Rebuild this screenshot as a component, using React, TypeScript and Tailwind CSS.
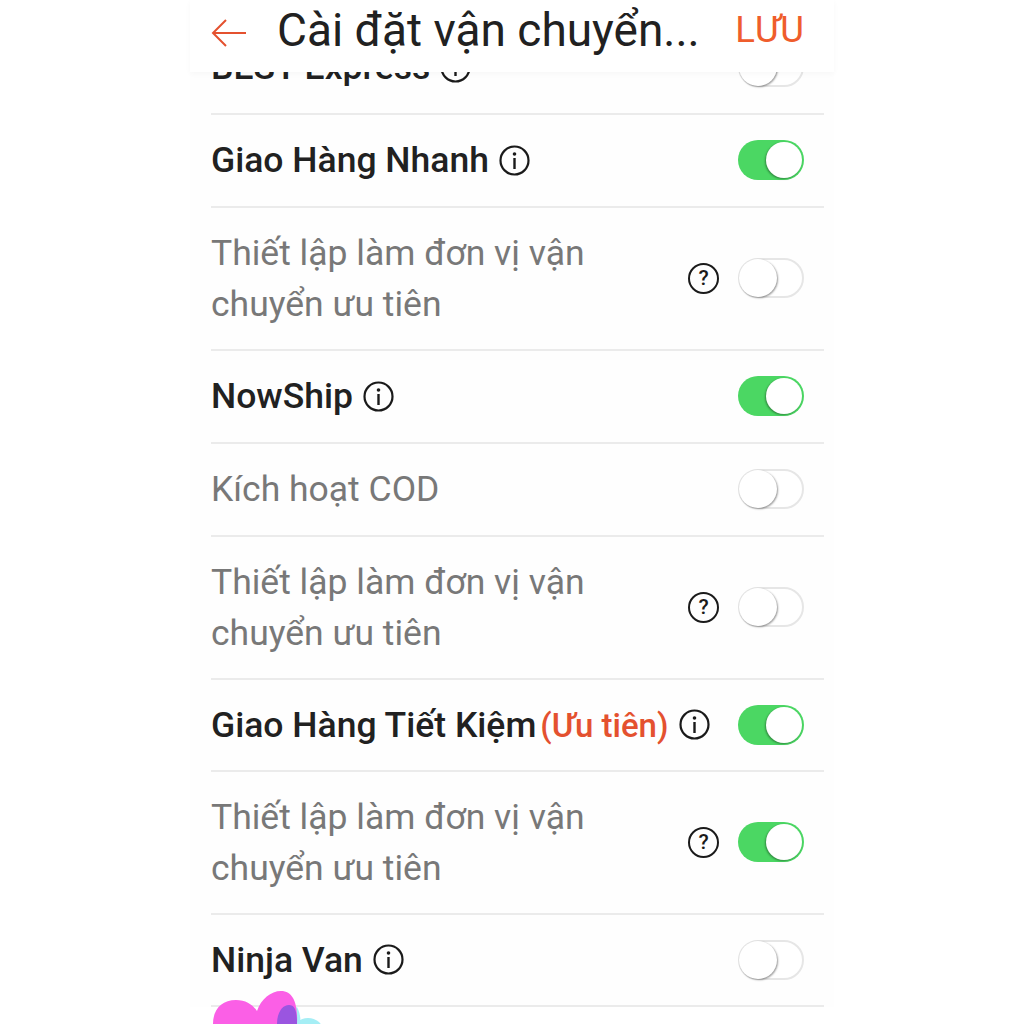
import React from "react";

const font = { fontFamily: "Roboto, 'Noto Sans', sans-serif" };

function Toggle({ on }: { on?: boolean }) {
  if (on) {
    return (
      <div className="relative h-[40px] w-[66px] shrink-0 rounded-full bg-[#4bd763]">
        <div className="absolute right-[2px] top-[2px] h-[36px] w-[36px] rounded-full bg-white shadow-[-1px_1px_2px_rgba(0,0,0,0.35)]" />
      </div>
    );
  }
  return (
    <div className="relative h-[40px] w-[66px] shrink-0 rounded-full border-2 border-[#e6e6e6] bg-white">
      <div className="absolute left-[-1px] top-[-1px] h-[38px] w-[38px] rounded-full bg-white shadow-[1px_1px_2px_rgba(0,0,0,0.4)]" />
    </div>
  );
}

function Info() {
  return (
    <svg width="31" height="31" viewBox="0 0 31 31" className="shrink-0" fill="none">
      <circle cx="15.5" cy="15.5" r="14" stroke="#1a1a1a" strokeWidth="2.2" />
      <circle cx="15.5" cy="9" r="1.8" fill="#1a1a1a" />
      <rect x="14.3" y="13" width="2.4" height="11" fill="#1a1a1a" />
    </svg>
  );
}

function Help() {
  return (
    <div className="flex h-[31px] w-[31px] shrink-0 items-center justify-center rounded-full border-2 border-[#1a1a1a] text-[21px] font-medium leading-none text-[#1a1a1a]">
      ?
    </div>
  );
}

function Row({ name, tag, on, short }: { name: string; tag?: boolean; on?: boolean; short?: boolean }) {
  return (
    <div className={`flex items-center border-b-2 border-[#ebebeb] pb-[1px] pr-[20px] ${short ? "h-[92px]" : "h-[93px]"}`}>
      <span className="pt-[2px] text-[35.5px] font-medium leading-none text-[#212121]">{name}</span>
      {tag && <span className="ml-[4px] pt-[2px] text-[33px] font-medium leading-none text-[#e4512f]">(Ưu tiên)</span>}
      <span className="ml-[10px]">
        <Info />
      </span>
      <div className="ml-auto">
        <Toggle on={on} />
      </div>
    </div>
  );
}

function SubRow({ on }: { on?: boolean }) {
  return (
    <div className="flex h-[143px] items-center border-b-2 border-[#ebebeb] pb-[1px] pr-[20px]">
      <span className="w-[440px] pt-[2px] text-[35.5px] leading-[51px] text-[#787878]">
        Thiết lập làm đơn vị vận chuyển ưu tiên
      </span>
      <div className="ml-auto flex items-center gap-[19px]">
        <Help />
        <Toggle on={on} />
      </div>
    </div>
  );
}

export default function App() {
  return (
    <div className="relative h-[1024px] w-full overflow-hidden bg-white" style={font}>
      <div className="ml-[190px] w-[644px] bg-[#fefefe]">
        <header className="relative z-10 flex h-[72px] items-center bg-white pb-[12px] pl-[21px] pr-[30px] shadow-[0_2px_6px_rgba(0,0,0,0.03)]">
          <svg width="36" height="30" viewBox="0 0 36 30" fill="none" className="mt-[5px] shrink-0">
            <path d="M35 15H2M15 2 2 15l13 13" stroke="#e4512f" strokeWidth="2" />
          </svg>
          <h1 className="ml-[30px] w-[440px] whitespace-nowrap text-[46px] font-normal leading-none text-[#212121]">
            Cài đặt vận chuyển...
          </h1>
          <span className="ml-auto text-[36.5px] leading-none text-[#ef5d2c]">LƯU</span>
        </header>
        <div className="-mt-[50px] pl-[21px] pr-[10px]">
          <Row name="BEST Express" />
          <Row name="Giao Hàng Nhanh" on />
          <SubRow />
          <Row name="NowShip" on />
          <div className="flex h-[93px] items-center border-b-2 border-[#ebebeb] pb-[1px] pr-[20px]">
            <span className="pt-[2px] text-[35.5px] leading-none text-[#787878]">Kích hoạt COD</span>
            <div className="ml-auto">
              <Toggle />
            </div>
          </div>
          <SubRow />
          <Row name="Giao Hàng Tiết Kiệm" tag on short />
          <SubRow on />
          <Row name="Ninja Van" short />
        </div>
      </div>
      <svg className="absolute left-[205px] top-[985px]" width="130" height="39" viewBox="0 0 130 39">
        <ellipse cx="103" cy="46" rx="15" ry="13" fill="#a5eef5" />
        <path d="M92 22c3 6 4 12 3 17h-6V24Z" fill="#a5eef5" />
        <path d="M8 39C8 24 17 15 31 15 41 15 48 20 52 26 56 14 66 6 76 6c12 0 17 12 16 33Z" fill="#fb5fe6" />
        <path d="M72 39C72 28 77 20 84 20c6 0 8 6 8 19Z" fill="#9a55e0" />
      </svg>
    </div>
  );
}
